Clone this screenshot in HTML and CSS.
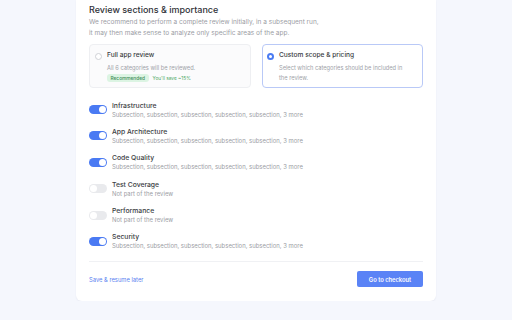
FILE: index.html
```html
<!DOCTYPE html>
<html lang="en">
<head>
    <meta charset="UTF-8">
    <meta name="viewport" content="width=device-width, initial-scale=1.0">
    <title>Review sections</title>
    <link rel="stylesheet" href="styles.css">
</head>
<body>

<div class="card">
    <h2 class="title">Review sections &amp; importance</h2>
    <p class="intro">We recommend to perform a complete review initially, in a subsequent run,<br>it may then make sense to analyze only specific areas of the app.</p>

    <!-- Scope options -->
    <div class="options">
        <div class="option">
            <span class="radio"></span>
            <div class="option-body">
                <div class="option-title">Full app review</div>
                <div class="option-desc">All 6 categories will be reviewed.</div>
                <div class="option-tags">
                    <span class="badge">Recommended</span>
                    <span class="save">You'll save ~15%</span>
                </div>
            </div>
        </div>
        <div class="option selected">
            <span class="radio checked"></span>
            <div class="option-body">
                <div class="option-title">Custom scope &amp; pricing</div>
                <div class="option-desc">Select which categories should be included in the review.</div>
            </div>
        </div>
    </div>

    <!-- Categories -->
    <div class="sections">
        <div class="section">
            <span class="toggle on"></span>
            <div>
                <div class="section-name">Infrastructure</div>
                <div class="section-sub">Subsection, subsection, subsection, subsection, subsection, 3 more</div>
            </div>
        </div>
        <div class="section">
            <span class="toggle on"></span>
            <div>
                <div class="section-name">App Architecture</div>
                <div class="section-sub">Subsection, subsection, subsection, subsection, subsection, 3 more</div>
            </div>
        </div>
        <div class="section">
            <span class="toggle on"></span>
            <div>
                <div class="section-name">Code Quality</div>
                <div class="section-sub">Subsection, subsection, subsection, subsection, subsection, 3 more</div>
            </div>
        </div>
        <div class="section">
            <span class="toggle"></span>
            <div>
                <div class="section-name">Test Coverage</div>
                <div class="section-sub">Not part of the review</div>
            </div>
        </div>
        <div class="section">
            <span class="toggle"></span>
            <div>
                <div class="section-name">Performance</div>
                <div class="section-sub">Not part of the review</div>
            </div>
        </div>
        <div class="section">
            <span class="toggle on"></span>
            <div>
                <div class="section-name">Security</div>
                <div class="section-sub">Subsection, subsection, subsection, subsection, subsection, 3 more</div>
            </div>
        </div>
    </div>

    <div class="footer">
        <a href="#" class="later">Save &amp; resume later</a>
        <button class="checkout">Go to checkout</button>
    </div>
</div>

</body>
</html>
```

FILE: styles.css
```css
body {
    font-family: Inter, "Noto Sans", sans-serif;
    background-color: #f5f7fd;
    margin: 0;
    color: #3a3c42;
}

.card {
    width: 334px;
    margin: 0 auto;
    padding: 4px 13px 0;
    background-color: white;
    border-radius: 0 0 6px 6px;
    box-shadow: 0 1px 2px rgba(30, 40, 80, 0.06);
    height: 297px;
}

.title {
    margin: 0;
    font-size: 9px;
    line-height: 12px;
    font-weight: 500;
    color: #303238;
}

.intro {
    margin: 0.5px 0 0;
    font-size: 6.5px;
    line-height: 11px;
    color: #9b9da4;
}

.options {
    display: flex;
    gap: 11px;
    margin-top: 5.5px;
}

.option {
    flex: 1;
    display: flex;
    gap: 5px;
    box-sizing: border-box;
    height: 44px;
    padding: 6px 12px 0 5px;
    border: 1px solid #eeeff2;
    border-radius: 4px;
    background-color: #fbfbfc;
}

.option.selected {
    border-color: #b9c9f7;
    background-color: white;
    padding-left: 4px;
}

.radio {
    flex: none;
    width: 5px;
    height: 5px;
    margin-top: 1.5px;
    border: 1px solid #cfd1d6;
    border-radius: 50%;
    background-color: white;
}

.radio.checked {
    border: 2px solid #4b7cf3;
    width: 3px;
    height: 3px;
    background-color: white;
}

.option-title {
    font-size: 6.6px;
    line-height: 9px;
    font-weight: 500;
}

.option-desc {
    margin-top: 3px;
    font-size: 5.7px;
    line-height: 9.5px;
    color: #a0a2a8;
}

.option-tags {
    display: flex;
    align-items: center;
    gap: 4px;
    margin-top: 1px;
}

.badge {
    padding: 0 3.5px;
    line-height: 8px;
    font-size: 4.8px;
    font-weight: 500;
    color: #3f8c57;
    background-color: #dcf4e3;
    border-radius: 3px;
}

.save {
    font-size: 4.8px;
    color: #4aa865;
}

.sections {
    display: flex;
    flex-direction: column;
    gap: 8.4px;
    margin-top: 12.5px;
}

.section {
    display: flex;
    align-items: center;
    gap: 5px;
}

.toggle {
    position: relative;
    flex: none;
    width: 18px;
    height: 9px;
    border-radius: 5px;
    background-color: #e9eaed;
}

.toggle::after {
    content: "";
    position: absolute;
    top: 1px;
    left: 1px;
    width: 7px;
    height: 7px;
    border-radius: 50%;
    background-color: white;
}

.toggle.on {
    background-color: #4a7af3;
}

.toggle.on::after {
    left: 10px;
}

.section-name {
    font-size: 6.8px;
    line-height: 9px;
    font-weight: 500;
}

.section-sub {
    font-size: 5.95px;
    line-height: 9px;
    color: #9b9da4;
}

.footer {
    display: flex;
    justify-content: space-between;
    align-items: center;
    margin-top: 11px;
    padding-top: 9px;
    border-top: 1px solid #f0f1f4;
}

.later {
    font-size: 5.8px;
    color: #5a7ff0;
    text-decoration: none;
}

.checkout {
    width: 66px;
    height: 16px;
    border: none;
    border-radius: 2px;
    background-color: #5a83f6;
    color: white;
    font-family: inherit;
    font-size: 5.8px;
    font-weight: 600;
    padding: 0;
}
```
